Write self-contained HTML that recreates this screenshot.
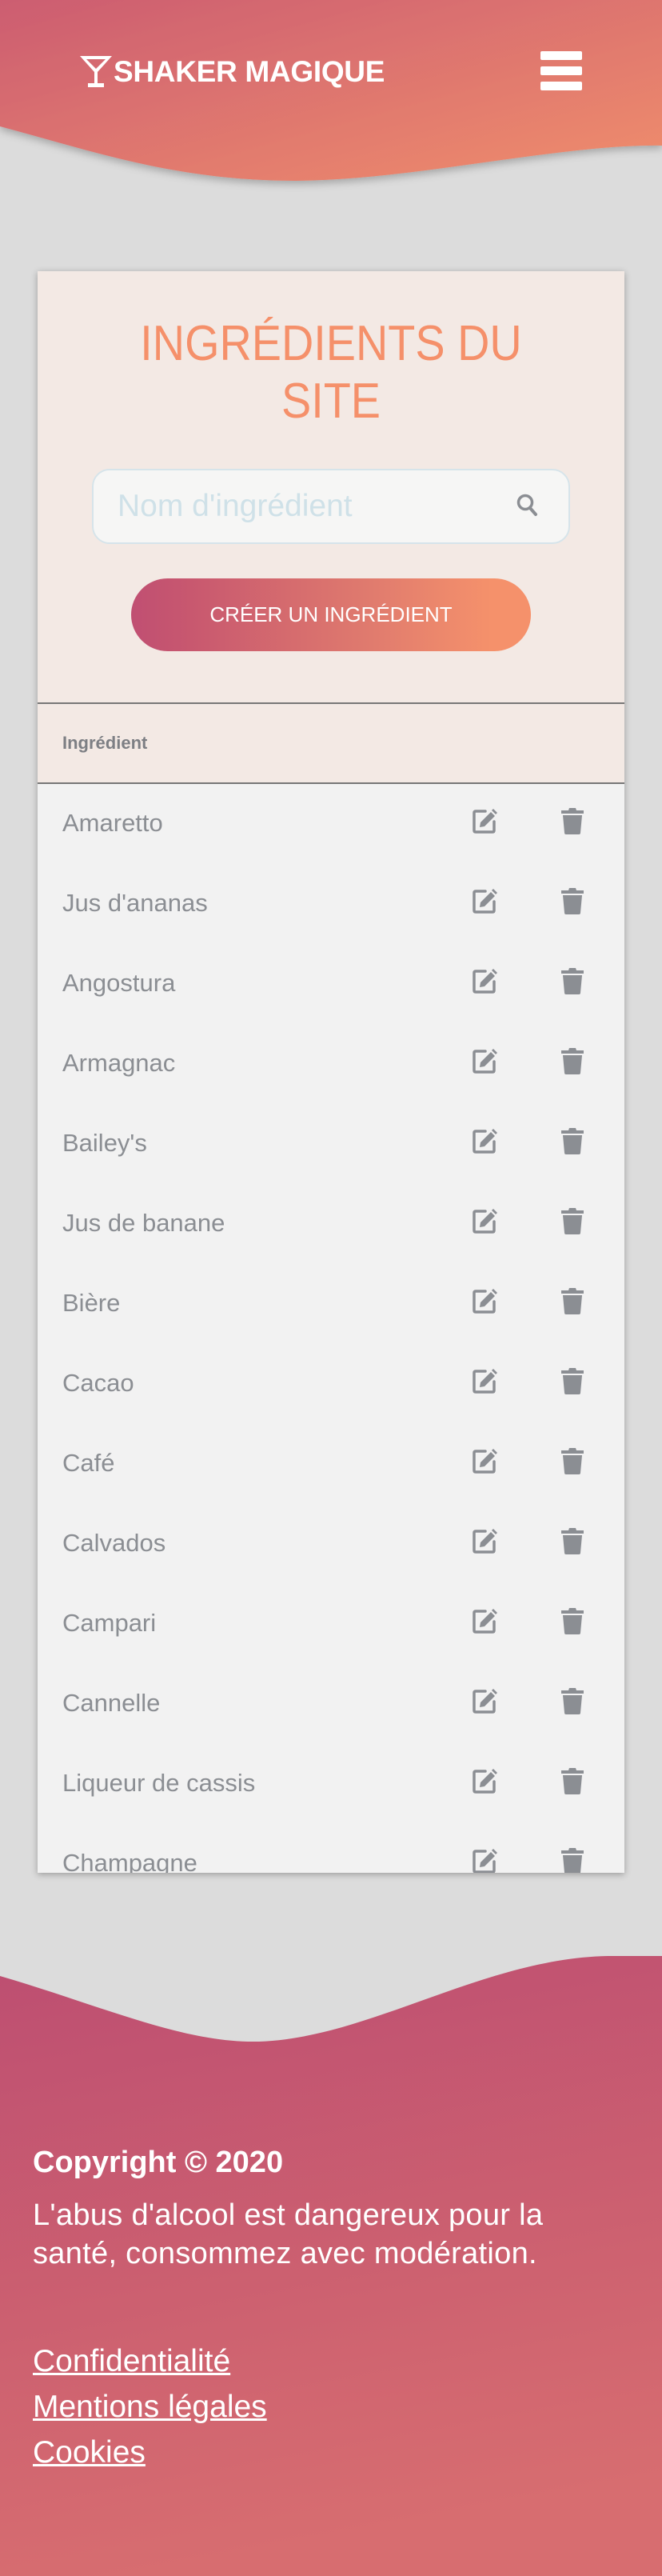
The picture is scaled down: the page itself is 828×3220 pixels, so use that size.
<!DOCTYPE html>
<html><head><meta charset="utf-8"><style>
*{margin:0;padding:0;box-sizing:border-box}
body{width:828px;height:3220px;background:#dcdcdc;font-family:"Liberation Sans",sans-serif;position:relative;overflow:hidden}
.hdr{position:absolute;left:0;top:0;width:828px;height:240px}
.logo{position:absolute;left:100px;top:69px;display:flex;align-items:center;color:#fff;font-weight:bold;font-size:37px;}
.logo span{margin-left:2px;letter-spacing:-0.3px}
.burger{position:absolute;left:676px;top:64px;width:52px}
.burger i{display:block;height:11px;background:#fff;border-radius:2px;margin-bottom:8px}
.card{position:absolute;left:47px;top:339px;width:734px;height:2002px;background:#f2f2f2;box-shadow:0 2px 8px rgba(0,0,0,.3);overflow:hidden}
.top{height:541px;background:#f3e9e4;border-bottom:2px solid #777;position:relative}
.title{position:absolute;top:55px;left:0;width:100%;text-align:center;color:#f5906a;font-size:62px;line-height:72px;font-weight:300;transform:scaleX(.9)}
.search{position:absolute;left:68px;top:247px;width:598px;height:94px;border:2px solid #d6e4ea;border-radius:22px;background:#f6f6f5}
.search .ph{position:absolute;left:30px;top:23px;font-size:39px;color:#cfe1e8}
.btn{position:absolute;left:117px;top:384px;width:500px;height:91px;border-radius:46px;background:linear-gradient(90deg,#c04f72 0%,#c8586f 15%,#e07b6e 60%,#f5916b 90%);color:#fff;font-size:26px;text-align:center;line-height:91px}
.th{height:100px;background:#f3e9e4;border-bottom:2px solid #777;padding-left:31px;line-height:98px;font-size:22px;font-weight:bold;color:#7d7f84}
.row{height:100px;position:relative}
.row .n{position:absolute;left:31px;top:31px;font-size:31px;color:#8b8e93}
.row svg{position:absolute}
.ft{position:absolute;left:0;top:2440px;width:828px;height:780px}
.ftx{position:absolute;left:41px;color:#fff}
a{color:#fff}
</style></head><body>
<svg class="hdr" viewBox="0 0 828 240" preserveAspectRatio="none">
<defs><linearGradient id="g1" x1="0" y1="0" x2="1" y2="1"><stop offset="0" stop-color="#cc5d71"/><stop offset="1" stop-color="#f08e6c"/></linearGradient>
<filter id="sh"><feDropShadow dx="0" dy="4" stdDeviation="5" flood-opacity=".25"/></filter></defs>
<path filter="url(#sh)" fill="url(#g1)" d="M0 0H828V182C700 180 520 225 370 226C220 226 120 190 0 158Z"/>
</svg>
<div class="logo"><svg width="40" height="40" viewBox="0 0 40 40"><path fill="#fff" d="M0 0H40L22 20V34H30V39H10V34H18V20Z M8 4L20 16L32 4Z" fill-rule="evenodd"/></svg><span>SHAKER MAGIQUE</span></div>
<div class="burger"><i></i><i></i><i></i></div>
<div class="card">
<div class="top">
<div class="title">INGRÉDIENTS DU<br>SITE</div>
<div class="search"><div class="ph">Nom d'ingrédient</div>
<svg style="position:absolute;left:528px;top:28px" width="30" height="32" viewBox="0 0 30 32"><circle cx="12" cy="12" r="8.5" fill="none" stroke="#8b8e93" stroke-width="3.5"/><path d="M18 19L25 27" stroke="#8b8e93" stroke-width="4" stroke-linecap="round"/></svg></div>
<div class="btn">CRÉER UN INGRÉDIENT</div>
</div>
<div class="th">Ingrédient</div>
<div id="rows"></div>
</div>
<svg class="ft" viewBox="0 0 828 780" preserveAspectRatio="none">
<defs><linearGradient id="g2" x1="0" y1="0" x2="0.2" y2="1"><stop offset="0" stop-color="#bd4e71"/><stop offset="1" stop-color="#d76d70"/></linearGradient></defs>
<path fill="url(#g2)" d="M0 30C120 65 220 110 310 112C450 115 600 8 760 5L828 5V780H0Z"/>
</svg>
<div class="ftx" style="top:2682px;font-size:38px;font-weight:bold">Copyright © 2020</div>
<div class="ftx" style="top:2745px;font-size:38px;line-height:48px;letter-spacing:0.3px">L'abus d'alcool est dangereux pour la<br>santé, consommez avec modération.</div>
<div class="ftx" style="top:2923px;font-size:39px;line-height:57px"><a href="#">Confidentialité</a><br><a href="#">Mentions légales</a><br><a href="#">Cookies</a></div>
<script>
var n=["Amaretto","Jus d'ananas","Angostura","Armagnac","Bailey's","Jus de banane","Bière","Cacao","Café","Calvados","Campari","Cannelle","Liqueur de cassis","Champagne"];
var h="";
var ed='<svg style="left:543px;top:30px" width="32" height="33" viewBox="0 0 32 33"><path d="M17 4H5Q3 4 3 6V28Q3 30 5 30H26Q28 30 28 28V17" fill="none" stroke="#8b8e93" stroke-width="3.5" stroke-linecap="round"/><path d="M10 24L11 18L24 5L29 10L16 23Z" fill="#8b8e93"/><path d="M25 3L27 1L32 6L30 8Z" fill="#8b8e93"/></svg>';
var tr='<svg style="left:655px;top:30px" width="28" height="33" viewBox="0 0 28 33"><path d="M0 3H9L10 0H18L19 3H28V7H0Z" fill="#8b8e93"/><path d="M2 9H26L24 31Q24 33 22 33H6Q4 33 4 31Z" fill="#8b8e93"/></svg>';
n.forEach(function(x){h+='<div class="row"><div class="n">'+x+'</div>'+ed+tr+'</div>'});
document.getElementById("rows").innerHTML=h;
</script>
</body></html>
